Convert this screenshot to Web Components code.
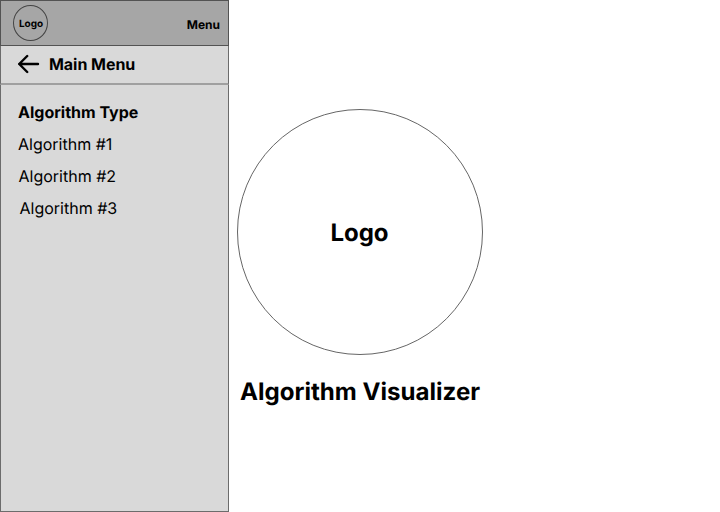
<!DOCTYPE html>
<html lang="en"><head><meta charset="utf-8"><title>Algorithm Visualizer</title>
<style>
html,body{margin:0;height:100%;overflow:hidden;background:#fff;color:#000;font-family:Inter,"Liberation Sans",sans-serif;text-rendering:geometricPrecision}
</style></head><body>
<av-app></av-app>
<script>
const define=(name,html)=>customElements.define(name,class extends HTMLElement{
  constructor(){super();this.attachShadow({mode:'open'}).innerHTML=html;}
});
define('av-logo',`<style>
:host{display:flex;align-items:center;justify-content:center;box-sizing:border-box;border-radius:50%;font-weight:700;flex:none;
width:var(--size);height:var(--tall,var(--size));font-size:var(--text);line-height:1.2;border:1px solid var(--ring)}
span{padding:var(--shift,0)}
</style><span><slot></slot></span>`);
define('av-topbar',`<style>
:host{display:flex;box-sizing:border-box;height:46px;justify-content:space-between;align-items:flex-start;background:#a6a6a6;border:1px solid #535353;padding:4px 8px 0 12px}
av-logo{--size:35px;--tall:36px;--text:10px;--ring:#444;--shift:1px 0 0 1px}
b{font-size:12px;line-height:15px;margin-top:12px}
</style><av-logo>Logo</av-logo><b><slot></slot></b>`);
define('av-back',`<style>
:host{display:flex;box-sizing:border-box;height:39px;align-items:center;gap:9px;padding:0 0 1px 17px;border:1px solid #6c6c6c;border-width:0 1px 2px;border-bottom-color:#a0a0a0;font-size:16px;letter-spacing:-.04px;font-weight:700;line-height:20px}
svg{display:block}
</style><svg width="22" height="20" viewBox="0 0 22 20" fill="none" stroke="#000" stroke-width="2.4" stroke-linecap="round" stroke-linejoin="round"><path d="M20 10H1.2M9.2 2L1.2 10L9.2 18"/></svg><span><slot></slot></span>`);
define('av-item',`<style>
:host{display:block;font-size:16px;line-height:20px;height:32px;padding-left:var(--in,0)}
:host([heading]){font-weight:700}
</style><slot></slot>`);
define('av-sidebar',`<style>
:host{display:flex;flex-direction:column;box-sizing:border-box;width:229px;height:512px;background:#d9d9d9}
nav{flex:1;border:1px solid #6c6c6c;border-top:0;padding:17px 0 0 17px}
</style><av-topbar>Menu</av-topbar><av-back>Main Menu</av-back>
<nav><av-item heading>Algorithm Type</av-item><av-item>Algorithm #1</av-item><av-item style="--in:.5px">Algorithm #2</av-item><av-item style="--in:1.5px">Algorithm #3</av-item></nav>`);
define('av-hero',`<style>
:host{display:flex;flex-direction:column;align-items:center;width:262px;padding-top:109px}
av-logo{--size:246px;--text:24px;--ring:#666;--shift:2px 1px 0 0}
h1{margin:22px 0 0;font-size:24.1px;line-height:29px;font-weight:700;white-space:nowrap}
</style><av-logo>Logo</av-logo><h1>Algorithm Visualizer</h1>`);
define('av-app',`<style>:host{display:flex;height:512px}</style><av-sidebar></av-sidebar><av-hero></av-hero>`);
</script></body></html>
